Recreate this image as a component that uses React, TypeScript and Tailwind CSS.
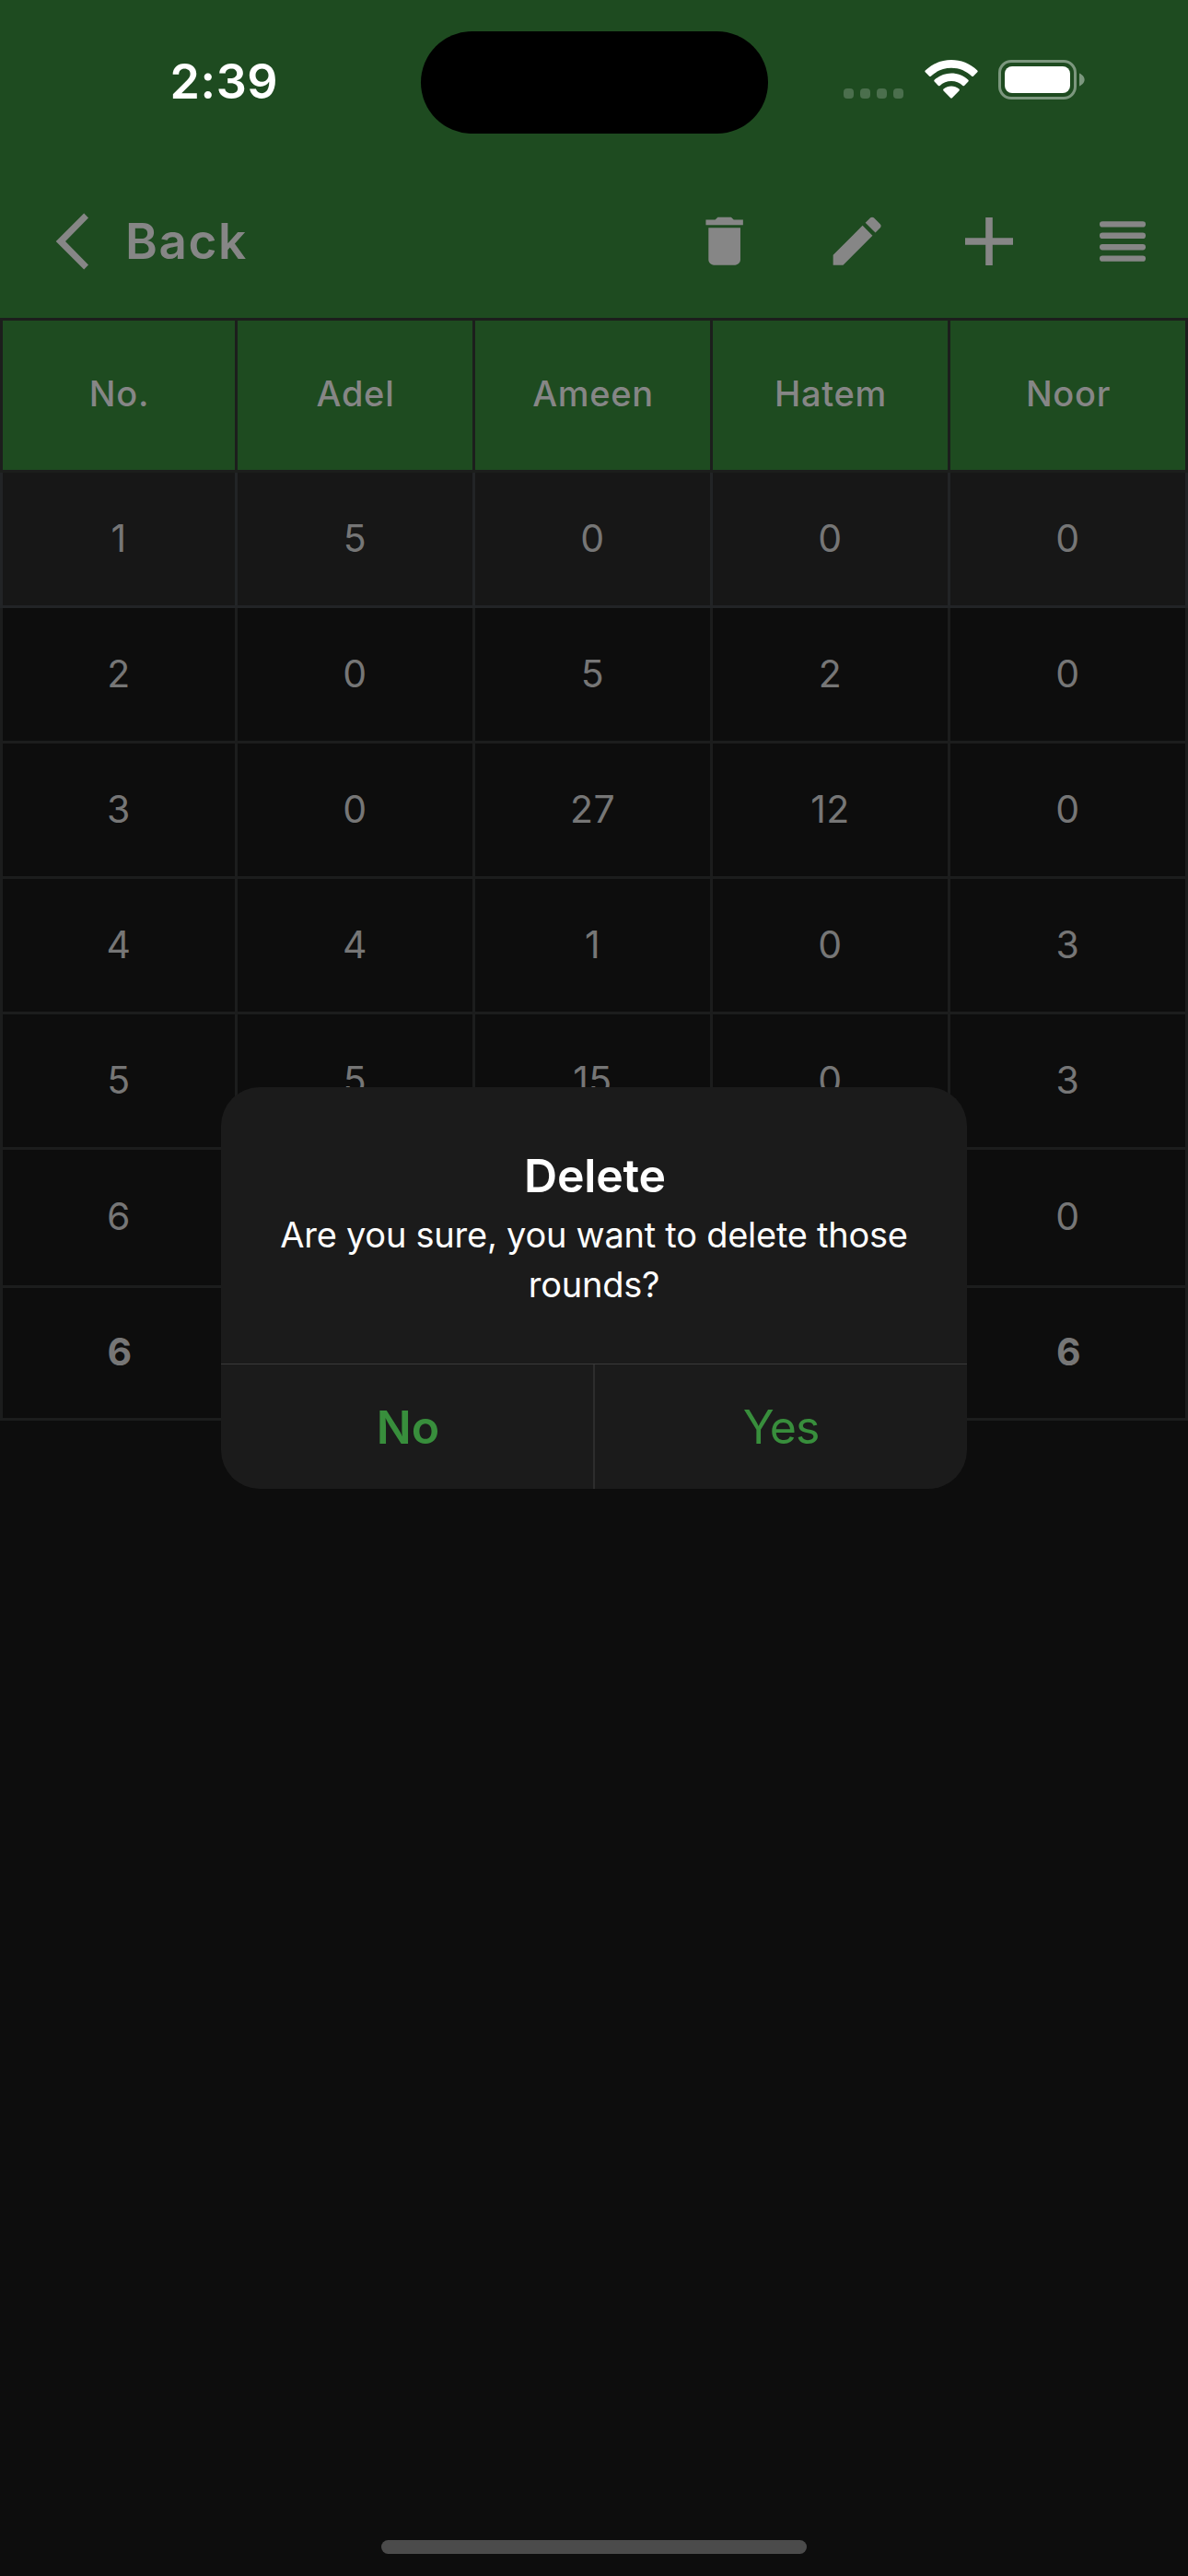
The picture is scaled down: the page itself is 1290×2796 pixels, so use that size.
import React from "react";

const players = ["No.", "Adel", "Ameen", "Hatem", "Noor"];

type Round = { cells: string[]; height: string; highlighted?: boolean; bold?: boolean };

const rounds: Round[] = [
  { cells: ["1", "5", "0", "0", "0"], height: "h-[147px]", highlighted: true },
  { cells: ["2", "0", "5", "2", "0"], height: "h-[147px]" },
  { cells: ["3", "0", "27", "12", "0"], height: "h-[147px]" },
  { cells: ["4", "4", "1", "0", "3"], height: "h-[147px]" },
  { cells: ["5", "5", "15", "0", "3"], height: "h-[147px]" },
  { cells: ["6", "", "", "", "0"], height: "h-[150px]" },
  { cells: ["6", "", "", "", "6"], height: "h-[144px]", bold: true },
];

function CellularDots() {
  return (
    <div className="mt-[31px] flex gap-[7px]">
      {[0, 1, 2, 3].map((i) => (
        <div key={i} className="size-[11px] rounded-[4px] bg-[#4b6f4d]" />
      ))}
    </div>
  );
}

function WifiIcon() {
  return (
    <svg className="ml-[22.5px] h-[43px] w-[58px]" viewBox="0 0 58 43" fill="white">
      <path d="M29 8.7C37.5 8.7 45.4 12 51.2 17.7C51.7 18.2 52.4 18.2 52.9 17.7L57.3 13.3C57.8 12.8 57.8 12 57.3 11.5C41.5-3.8 16.5-3.8.7 11.5C.2 12 .2 12.8.7 13.3L5.1 17.7C5.6 18.2 6.3 18.2 6.8 17.7C12.6 12 20.5 8.7 29 8.7Z" />
      <path d="M29 23.1C33.6 23.1 38 24.8 41.4 27.9C41.9 28.4 42.6 28.4 43.1 27.9L47.4 23.5C47.9 23 47.9 22.2 47.4 21.7C37 12 21 12 10.6 21.7C10.1 22.2 10.1 23 10.6 23.5L14.9 27.9C15.4 28.4 16.1 28.4 16.6 27.9C20 24.8 24.4 23.1 29 23.1Z" />
      <path d="M37.5 33.4C38 32.9 38 32.1 37.4 31.6C32.5 27.6 25.5 27.6 20.6 31.6C20 32.1 20 32.9 20.5 33.4L28.1 41.3C28.6 41.8 29.4 41.8 29.9 41.3Z" />
    </svg>
  );
}

function BatteryIcon() {
  return (
    <svg className="ml-[22.5px] h-[43px] w-[94px]" viewBox="0 0 94 43">
      <rect x="1.5" y="1.5" width="82" height="40" rx="12.5" fill="none" stroke="#7c977e" strokeWidth="3" />
      <path d="M88 14.5V28.5C91 27.2 93.6 24.6 93.6 21.5C93.6 18.4 91 15.8 88 14.5Z" fill="#7c977e" />
      <rect x="7" y="7" width="71" height="29" rx="8" fill="white" />
    </svg>
  );
}

function StatusBar() {
  return (
    <div className="flex h-[177px] items-center">
      <div className="w-[456.5px] pl-[184.5px] text-[52px] leading-[60px] font-semibold tracking-[0.6px] text-white">
        2:39
      </div>
      <div className="mt-[1px] h-[111px] w-[377px] rounded-full bg-black" />
      <div className="flex items-start pb-[4px] pl-[82.5px]">
        <CellularDots />
        <WifiIcon />
        <BatteryIcon />
      </div>
    </div>
  );
}

function ToolbarButton({ children }: { children: React.ReactNode }) {
  return <button className="flex w-36 shrink-0 items-center justify-center">{children}</button>;
}

function Toolbar() {
  return (
    <div className="flex h-[168px] items-center justify-between pt-[1px] text-[#868686]">
      <button className="flex items-center pl-[60px]">
        <svg className="h-[62px] w-[36px]" viewBox="0 0 36 62" fill="currentColor">
          <path d="M31.2.5L36 5.5L11 31L36 56.5L31.2 61.5L.7 31Z" />
        </svg>
        <span className="ml-[40px] text-[53px] leading-[64px] font-semibold tracking-[1.6px]">Back</span>
      </button>
      <div className="-mr-[0.5px] flex h-full">
        <ToolbarButton>
          <svg className="size-[69.3px]" viewBox="0 0 24 24" fill="currentColor">
            <path d="M6 19c0 1.1.9 2 2 2h8c1.1 0 2-.9 2-2V7H6v12zM19 4h-3.5l-1-1h-5l-1 1H5v2h14V4z" />
          </svg>
        </ToolbarButton>
        <ToolbarButton>
          <svg className="size-[69.3px]" viewBox="0 0 24 24" fill="currentColor">
            <path d="M3 17.25V21h3.75L17.81 9.94l-3.75-3.75L3 17.25zM20.71 7.04c.39-.39.39-1.02 0-1.41l-2.34-2.34c-.39-.39-1.02-.39-1.41 0l-1.83 1.83 3.75 3.75 1.83-1.83z" />
          </svg>
        </ToolbarButton>
        <ToolbarButton>
          <svg className="mr-[1px] size-[52px]" viewBox="0 0 52 52" fill="currentColor">
            <path d="M22.2 0h7.6v22.2H52v7.6H29.8V52h-7.6V29.8H0v-7.6h22.2z" />
          </svg>
        </ToolbarButton>
        <ToolbarButton>
          <svg className="h-[44px] w-[50px]" viewBox="0 0 50 44" fill="currentColor">
            <rect y="0.2" width="50" height="6.4" rx="3.1" />
            <rect y="12.6" width="50" height="6.4" rx="3.1" />
            <rect y="25" width="50" height="6.4" rx="3.1" />
            <rect y="37.4" width="50" height="6.4" rx="3.1" />
          </svg>
        </ToolbarButton>
      </div>
    </div>
  );
}

function ScoreTable() {
  return (
    <div>
      <div className="grid h-[168px] grid-cols-5 border-y-[3px] border-[#1c1e1c] bg-[#1e4b20]">
        {players.map((name) => (
          <div
            key={name}
            className="flex items-center justify-center border-r-[3px] border-[#1c1e1c] pb-[4px] pl-[1px] text-[38px] font-medium tracking-[0.7px] text-[#868686] first:border-l-[3px]"
          >
            {name}
          </div>
        ))}
      </div>
      {rounds.map((round, r) => (
        <div
          key={r}
          className={`grid grid-cols-5 border-b-[3px] ${round.height} ${
            round.highlighted ? "border-[#222426] bg-[#171717]" : "border-[#1c1d1d]"
          }`}
        >
          {round.cells.map((value, c) => (
            <div
              key={c}
              className={`flex items-center justify-center border-r-[3px] text-[41px] tracking-[0.5px] text-[#767676] first:border-l-[3px] ${
                round.highlighted ? "border-[#222426]" : "border-[#1c1d1d]"
              } ${round.bold ? "pb-[2px] pl-[2px] font-bold" : "pb-[1px]"}`}
            >
              {value}
            </div>
          ))}
        </div>
      ))}
    </div>
  );
}

function DeleteDialog() {
  return (
    <div className="absolute inset-0 flex items-center justify-center">
      <div className="flex h-[436px] w-[810px] flex-col overflow-hidden rounded-[42px] bg-[#1b1b1b] text-center">
        <div className="h-[300px] px-[60px] pt-[66px] text-white">
          <h2 className="pl-[2px] text-[50px] leading-[60px] font-semibold tracking-[-0.2px]">Delete</h2>
          <p className="mt-[7px] text-[38px] leading-[54px] tracking-[-0.25px]">
            Are you sure, you want to delete those rounds?
          </p>
        </div>
        <div className="flex h-[136px] border-t border-[#3a3a3a] text-[50px] text-[#388e3c]">
          <button className="w-[404px] pt-[1px] pl-[2px] font-semibold">No</button>
          <div className="w-[2px] bg-[#2d2d2d]" />
          <button className="w-[404px] pt-[1px] tracking-[-1px]">Yes</button>
        </div>
      </div>
    </div>
  );
}

export default function App() {
  return (
    <div className="relative flex h-[2796px] w-[1290px] flex-col overflow-hidden bg-[#0d0d0d] font-[Inter,sans-serif]">
      <header className="bg-[#1e4b20]">
        <StatusBar />
        <Toolbar />
      </header>
      <ScoreTable />
      <div className="mt-auto mb-6 h-[15px] w-[462px] self-center rounded-full bg-[#4b4b4b]" />
      <DeleteDialog />
    </div>
  );
}
